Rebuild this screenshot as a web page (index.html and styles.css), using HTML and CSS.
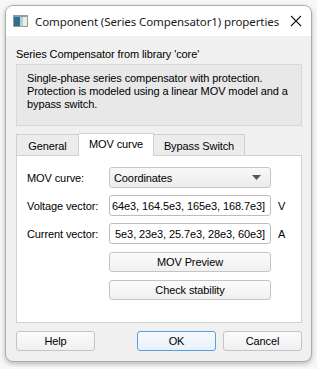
FILE: index.html
```html
<!DOCTYPE html>
<html lang="en">
<head>
    <meta charset="UTF-8">
    <title>Component (Series Compensator1) properties</title>
    <link rel="stylesheet" href="styles.css">
</head>
<body>
    <div class="window">
        <div class="titlebar">
            <svg class="app-icon" width="15" height="12" viewBox="0 0 15 12">
                <rect x="0.5" y="0.5" width="14" height="11" fill="#f4f4f4" stroke="#9a9a9a"/>
                <rect x="1" y="2" width="6" height="9" fill="#2f6f8f"/>
                <rect x="7" y="2" width="3" height="9" fill="#b9d3c9"/>
                <rect x="10" y="2" width="4" height="9" fill="#e8f0ec"/>
                <rect x="1" y="1" width="13" height="1" fill="#7aa0b8"/>
            </svg>
            <span class="title">Component (Series Compensator1) properties</span>
            <svg class="close" width="12" height="12" viewBox="0 0 12 12">
                <path d="M1 1 L11 11 M11 1 L1 11" stroke="#1a1a1a" stroke-width="1.1"/>
            </svg>
        </div>

        <div class="content">
            <div class="lib-label">Series Compensator from library 'core'</div>
            <div class="description">
                Single-phase series compensator with protection.<br>
                Protection is modeled using a linear MOV model and a<br>
                bypass switch.
            </div>

            <div class="tabs">
                <div class="tab general">General</div>
                <div class="tab active">MOV curve</div>
                <div class="tab bypass">Bypass Switch</div>
            </div>
            <div class="tab-pane">
                <div class="form-row">
                    <span class="field-label">MOV curve:</span>
                    <div class="combo">
                        <span>Coordinates</span>
                        <svg width="9" height="5" viewBox="0 0 9 5"><path d="M0 0 H9 L4.5 5 Z" fill="#555"/></svg>
                    </div>
                </div>
                <div class="form-row">
                    <span class="field-label">Voltage vector:</span>
                    <div class="line-edit"><span>64e3, 164.5e3, 165e3, 168.7e3]</span></div>
                    <span class="unit">V</span>
                </div>
                <div class="form-row">
                    <span class="field-label">Current vector:</span>
                    <div class="line-edit"><span>5e3, 23e3, 25.7e3, 28e3, 60e3]</span></div>
                    <span class="unit">A</span>
                </div>
                <div class="form-row">
                    <span class="field-label"></span>
                    <button class="btn wide">MOV Preview</button>
                </div>
                <div class="form-row">
                    <span class="field-label"></span>
                    <button class="btn wide">Check stability</button>
                </div>
            </div>

            <div class="dialog-buttons">
                <button class="btn">Help</button>
                <div class="spacer"></div>
                <button class="btn default">OK</button>
                <button class="btn">Cancel</button>
            </div>
        </div>
    </div>
</body>
</html>
```

FILE: styles.css
```css
* {
    margin: 0;
    padding: 0;
    box-sizing: border-box;
}

body {
    background: #f7f7f7;
    font-family: 'Liberation Sans', Arial, sans-serif;
    font-size: 11px;
    letter-spacing: -0.1px;
    color: #000;
    padding: 5px;
}

.window {
    width: 307px;
    height: 357px;
    border: 1px solid #ababab;
    border-radius: 8px;
    background: #f0f0f0;
    overflow: hidden;
    box-shadow: 0 2px 5px rgba(0, 0, 0, 0.25);
    display: flex;
    flex-direction: column;
}

.titlebar {
    height: 30px;
    background: #ffffff;
    display: flex;
    align-items: center;
    padding-left: 7px;
}

.app-icon {
    margin-right: 7px;
}

.title {
    font-family: 'Noto Sans', sans-serif;
    font-size: 11.5px;
    color: #1a1a1a;
    white-space: nowrap;
    flex: 1;
}

.close {
    margin-right: 9px;
}

.content {
    padding: 0 9px 0 10px;
    display: flex;
    flex-direction: column;
}

.lib-label {
    margin-top: 11px;
    line-height: 14px;
}

.description {
    margin-top: 3px;
    height: 62px;
    background: #e8e8e8;
    border: 1px solid #d8d8d8;
    padding: 7px 10px;
    line-height: 13px;
    white-space: nowrap;
}

.tabs {
    display: flex;
    margin-top: 7px;
    height: 22px;
    align-items: flex-end;
    position: relative;
    z-index: 1;
}

.tab {
    height: 21px;
    border: 1px solid #d0d0d0;
    border-bottom: none;
    background: #ececec;
    text-align: center;
    white-space: nowrap;
    line-height: 20px;
    padding-top: 1px;
}

.tab.general {
    width: 63px;
}

.tab.active {
    width: 75px;
    height: 23px;
    background: #ffffff;
    border-left: none;
    padding-top: 0;
    margin-bottom: -1px;
}

.tab.bypass {
    width: 91px;
    border-left: none;
}

.tab-pane {
    height: 168px;
    background: #ffffff;
    border: 1px solid #d0d0d0;
    padding: 11px 0 0 10px;
    display: flex;
    flex-direction: column;
    gap: 7px;
}

.form-row {
    display: flex;
    align-items: center;
    height: 21px;
}

.field-label {
    width: 82px;
}

.combo {
    width: 162px;
    height: 21px;
    border: 1px solid #c6c6c6;
    border-radius: 3px;
    background: linear-gradient(#f8f8f8, #ececec);
    display: flex;
    align-items: center;
    justify-content: space-between;
    padding: 0 9px 0 4px;
}

.line-edit {
    width: 162px;
    height: 21px;
    border: 1px solid #bcbcbc;
    border-radius: 3px;
    background: #ffffff;
    display: flex;
    align-items: center;
    justify-content: flex-end;
    overflow: hidden;
    padding-right: 5px;
    white-space: nowrap;
}

.unit {
    margin-left: 7px;
}

.btn {
    font-family: 'Liberation Sans', Arial, sans-serif;
    font-size: 11px;
    letter-spacing: -0.1px;
    color: #000;
    width: 79px;
    height: 20px;
    border: 1px solid #c4c4c4;
    border-radius: 3px;
    background: linear-gradient(#fbfbfb, #f0f0f0);
}

.btn.wide {
    width: 162px;
}

.dialog-buttons {
    display: flex;
    margin-top: 8px;
    gap: 7px;
}

.spacer {
    flex: 1;
}

.btn.default {
    border-color: #5a9fdc;
    background: linear-gradient(#f6fafd, #e8f1fa);
}
```
